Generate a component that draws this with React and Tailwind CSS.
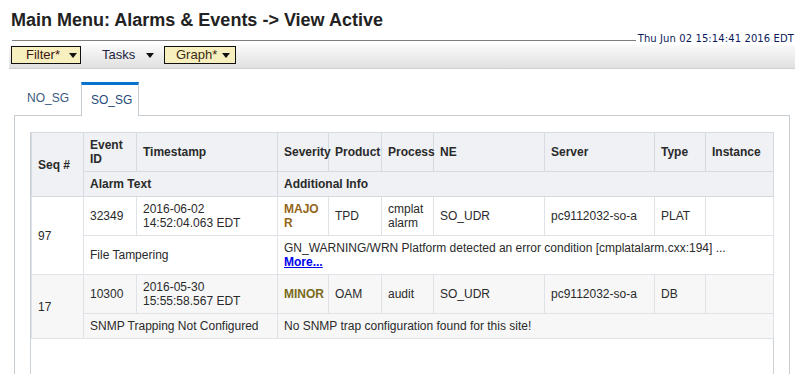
import React from 'react';

const Arrow = () => (
    <svg width="8" height="5" viewBox="0 0 8 5" className="shrink-0"><polygon points="0,0 8,0 4,5" fill="#111" /></svg>
);

const headCell = "border border-[#d5dbe0] bg-[#eff1f4] px-[6px] py-[5px] text-left align-middle font-bold leading-[14px]";
const cell = "border border-[#dfe3e7] px-[6px] py-[5px] text-left align-middle leading-[14px]";

const App = () => {
    return (
        <div className="w-[805px] h-[374px] overflow-hidden bg-white text-[#222] font-['Liberation_Sans',Arial,sans-serif]">
            <h1 className="pl-[11px] pt-[9px] text-[18px] font-bold leading-[22px] text-[#222]">Main Menu: Alarms &amp; Events -&gt; View Active</h1>
            <div className="flex items-end pl-[12px] pr-[11px] h-[14px]">
                <div className="flex-1 border-b border-[#7f7f7f] mb-[4px]"></div>
                <span className="pl-[2px] text-[10px] leading-[12px] text-[#0c1a5c] font-['DejaVu_Sans',Verdana,sans-serif] tracking-[0.1px]">Thu Jun 02 15:14:41 2016 EDT</span>
            </div>
            <div className="ml-[9px] w-[786px] h-[24px] flex items-start pt-[1px] pl-[2px] bg-gradient-to-b from-[#fafafa] to-[#e0e0e0] border-b border-[#cfcfcf] text-[13px] leading-[16px]">
                <div className="w-[70px] h-[18px] flex items-center border border-[#111] bg-[#f7f0be] pl-[14px] pr-[3px] text-[#3b1414]">
                    <span className="flex-1">Filter*</span><Arrow />
                </div>
                <div className="w-[83px] h-[18px] flex items-center pl-[21px] pr-[10px] text-[#1c2440]">
                    <span className="flex-1">Tasks</span><Arrow />
                </div>
                <div className="w-[72px] h-[18px] flex items-center border border-[#111] bg-[#f7f0be] pl-[11px] pr-[5px] text-[#3b2a14]">
                    <span className="flex-1">Graph*</span><Arrow />
                </div>
            </div>
            <div className="flex items-end pl-[14px] mt-[13px]">
                <div className="w-[67px] h-[30px] pl-[13px] pt-[5px] text-[12px] leading-[16px] text-[#3a5a80]">NO_SG</div>
                <div className="w-[58px] h-[34px] border-t-[3px] border-t-[#0572ce] border-x border-[#c5cdd3] bg-white pl-[9px] pt-[7px] text-[12px] leading-[16px] text-[#1f4a78] -mb-px relative">SO_SG</div>
            </div>
            <div className="ml-[14px] w-[776px] h-[300px] border border-[#c5cdd3] pl-[15px] pr-[16px] pt-[16px]">
                <div className="h-[280px] w-[744px] border-x border-[#c9d0d6]">
                    <table className="w-[742px] table-fixed border-collapse text-[12px] text-[#2a2a2a]">
                        <colgroup>
                            <col className="w-[52px]" />
                            <col className="w-[53px]" />
                            <col className="w-[141px]" />
                            <col className="w-[51px]" />
                            <col className="w-[53px]" />
                            <col className="w-[52px]" />
                            <col className="w-[111px]" />
                            <col className="w-[110px]" />
                            <col className="w-[51px]" />
                            <col className="w-[68px]" />
                        </colgroup>
                        <thead>
                            <tr>
                                <th rowSpan={2} className={headCell}>Seq #</th>
                                <th className={headCell}>Event ID</th>
                                <th className={headCell}>Timestamp</th>
                                <th className={headCell + " whitespace-nowrap"}>Severity</th>
                                <th className={headCell + " whitespace-nowrap"}>Product</th>
                                <th className={headCell + " whitespace-nowrap"}>Process</th>
                                <th className={headCell}>NE</th>
                                <th className={headCell}>Server</th>
                                <th className={headCell}>Type</th>
                                <th className={headCell}>Instance</th>
                            </tr>
                            <tr>
                                <th colSpan={2} className={headCell}>Alarm Text</th>
                                <th colSpan={7} className={headCell}>Additional Info</th>
                            </tr>
                        </thead>
                        <tbody>
                            <tr className="bg-white">
                                <td rowSpan={2} className={cell}>97</td>
                                <td className={cell}>32349</td>
                                <td className={cell}>2016-06-02<br />14:52:04.063 EDT</td>
                                <td className={cell + " font-bold text-[#93661a] break-all"}>MAJOR</td>
                                <td className={cell}>TPD</td>
                                <td className={cell}>cmplat alarm</td>
                                <td className={cell}>SO_UDR</td>
                                <td className={cell}>pc9112032-so-a</td>
                                <td className={cell}>PLAT</td>
                                <td className={cell}></td>
                            </tr>
                            <tr className="bg-white">
                                <td colSpan={2} className={cell}>File Tampering</td>
                                <td colSpan={7} className={cell}>
                                    GN_WARNING/WRN Platform detected an error condition [cmplatalarm.cxx:194] ...<br />
                                    <a href="#" className="font-bold text-[#0000ee] underline">More...</a>
                                </td>
                            </tr>
                            <tr className="bg-[#f7f7f7]">
                                <td rowSpan={2} className={cell}>17</td>
                                <td className={cell}>10300</td>
                                <td className={cell}>2016-05-30<br />15:55:58.567 EDT</td>
                                <td className={cell + " font-bold text-[#7b6a1c]"}>MINOR</td>
                                <td className={cell}>OAM</td>
                                <td className={cell}>audit</td>
                                <td className={cell}>SO_UDR</td>
                                <td className={cell}>pc9112032-so-a</td>
                                <td className={cell}>DB</td>
                                <td className={cell}></td>
                            </tr>
                            <tr className="bg-[#f7f7f7]">
                                <td colSpan={2} className={cell}>SNMP Trapping Not Configured</td>
                                <td colSpan={7} className={cell}>No SNMP trap configuration found for this site!</td>
                            </tr>
                        </tbody>
                    </table>
                </div>
            </div>
        </div>
    );
};

export default App;
